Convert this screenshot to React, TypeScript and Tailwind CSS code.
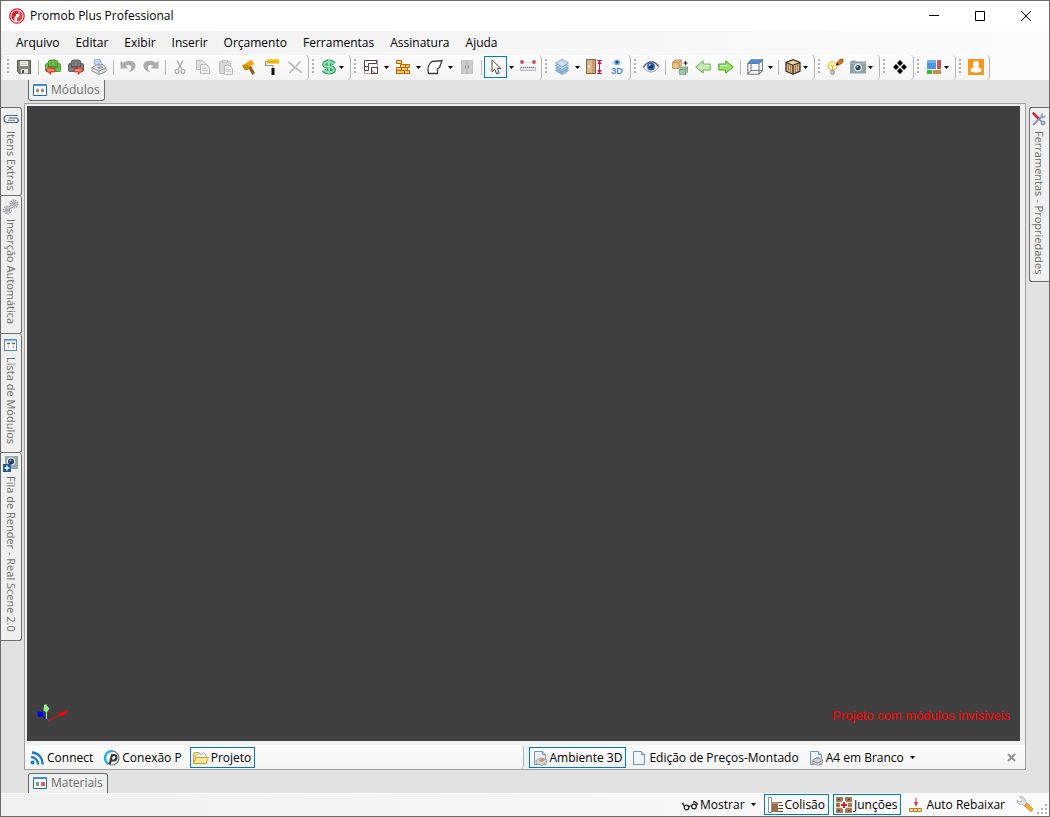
import type { ReactNode } from 'react';
import clsx from 'clsx';

const menus = ['Arquivo', 'Editar', 'Exibir', 'Inserir', 'Orçamento', 'Ferramentas', 'Assinatura', 'Ajuda'];

function Svg({ children, size = 16 }: { children: ReactNode; size?: number }) {
  return (
    <svg width={size} height={size} viewBox={`0 0 ${size} ${size}`} fill="none" className="shrink-0 overflow-visible" aria-hidden="true">
      {children}
    </svg>
  );
}

function Arrow() {
  return (
    <svg width="5" height="3" viewBox="0 0 5 3" className="shrink-0" aria-hidden="true">
      <path d="M0 0h5L2.5 3z" fill="#000" />
    </svg>
  );
}

/* ---------- icons ---------- */

const LogoIcon = () => (
  <Svg>
    <circle cx="8" cy="8" r="7.2" fill="#fff" stroke="#d9222a" strokeWidth="1.3" />
    <path d="M8 2.5a5.5 5.5 0 0 0-2.5 10.4V8.5H7V6h2.5V2.8z" fill="#d9222a" />
    <path d="M10.3 3v4.2c0 1.3-1 2.2-2.3 2.2v4.1a5.5 5.500 0 0 0 2.3-10.5z" fill="#e0444a" />
    <path d="M6.8 13V8.800h1.700" stroke="#fff" />
  </Svg>
);

const SaveIcon = () => (
  <Svg>
    <path d="M1.5 1.5h13v13h-11l-2-2z" fill="#85857d" stroke="#55554f" />
    <path d="M4 2h8v5H4z" fill="#f2f2ea" />
    <path d="M5 3.5h6M5 5.5h6" stroke="#c6c6b2" />
    <path d="M5 10h7v4.5H5z" fill="#e4e4de" />
    <path d="M6 11h2v3H6z" fill="#4a4a46" />
  </Svg>
);

function Armchair({ fill, dark, right }: { fill: string; dark: string; right?: boolean }) {
  return (
    <Svg>
      <path d="M3 4q0-3 3-3h4q3 0 3 3v4H3z" fill={fill} stroke={dark} strokeWidth=".8" />
      <path
        d="M.5 6q0-1.500 1.500-1.500t1.500 1.500v2h9V6q0-1.500 1.500-1.500t1.500 1.500v5.500q0 1-1 1h-13q-1 0-1-1z"
        fill={fill}
        stroke={dark}
        strokeWidth=".8"
      />
      <path d="M6 2.5v4M10 2.5v4M3.5 9h9" stroke={dark} strokeWidth=".5" />
      <path
        d={right ? 'M6 9.500h4V7l5.500 4.300L10 15.500V13H6z' : 'M10 9.500H6V7L.5 11.300 6 15.500V13h4z'}
        fill="#e8604b"
        stroke="#b62c1c"
        strokeWidth=".6"
      />
      <path d={right ? 'M7 11h6' : 'M3 11h6'} stroke="#f5a79a" />
    </Svg>
  );
}

const PrinterIcon = () => (
  <Svg>
    <path d="M3 1l6-.5 2 6-6 1.500z" fill="#d9e9fb" stroke="#7da4d4" />
    <path d="M5 3l3.500-.4M5.600 5l3.500-.7" stroke="#8ab0dd" strokeWidth=".7" />
    <path d="M1 8.500L5 6l7-.5 3 3.500v3.500l-7 3-7-3.500z" fill="#e3e4e6" stroke="#8b8f94" strokeLinejoin="round" />
    <path d="M1 8.500l7 3.500 7-3M8 12v3" stroke="#8b8f94" />
    <path d="M5.500 8l5-1 2 1.500-4.500 1.700z" fill="#9a9da1" />
  </Svg>
);

const UndoIcon = () => (
  <Svg>
    <path
      d="M.5 1.500v8h8L5.800 7C7.500 5.500 10.300 5.600 11 7.800c.6 2-.5 3.900-2.800 5.400 4.700-.8 7.600-3.400 7.300-7C15.100 1.700 8 .2 3 4z"
      fill="#ababab"
    />
  </Svg>
);

const RedoIcon = () => (
  <Svg>
    <path
      d="M15.500 1.500v8h-8L10.200 7C8.500 5.500 5.700 5.600 5 7.800c-.6 2 .5 3.900 2.800 5.400C3.100 12.400.2 9.800.5 6.200.9 1.700 8 .2 13 4z"
      fill="#ababab"
    />
  </Svg>
);

const CutIcon = () => (
  <Svg>
    <path d="M5 1.500l5 9M11 1.500l-5 9" stroke="#b0b0b0" strokeWidth="1.500" />
    <circle cx="5" cy="12.500" r="1.900" stroke="#b0b0b0" strokeWidth="1.300" />
    <circle cx="11" cy="12.500" r="1.900" stroke="#b0b0b0" strokeWidth="1.300" />
  </Svg>
);

const CopyIcon = () => (
  <Svg>
    <path d="M1.500 1.500h6l3 3v6h-9z" fill="#e0e0e0" stroke="#bdbdbd" />
    <path d="M5.500 5.500h6l3 3v6h-9z" fill="#ececec" stroke="#b8b8b8" />
    <path d="M7 9.500h4M7 11.500h6" stroke="#c9c9c9" />
  </Svg>
);

const PasteIcon = () => (
  <Svg>
    <rect x="1.500" y="2.500" width="11" height="12" rx="1" fill="#d8d8d8" stroke="#bababa" />
    <path d="M4.500 3.500v-2h5v2z" fill="#ececec" stroke="#bababa" />
    <path d="M6.500 6.500h5l3 3v6h-8z" fill="#f0f0f0" stroke="#bababa" />
    <path d="M8 10.500h5M8 12.500h5" stroke="#cccccc" />
  </Svg>
);

const HammerIcon = () => (
  <Svg>
    <path d="M6.500 7.500L9.500 6l4.500 8-2.500 2z" fill="#8d5b16" />
    <path d="M1 6.500L10.500.8l2.800 4L8 8.500l-1 2.500H4z" fill="#eaa614" />
    <path d="M1 6.500L7 6l1 2.500-1 2.500H4z" fill="#c98607" />
  </Svg>
);

const RollerIcon = () => (
  <Svg>
    <path d="M3 0h12v4.500H3z" fill="#f3b000" />
    <path d="M3 0h12v1.500H3z" fill="#ffd04a" />
    <path d="M3 2.500H1.500v4H9v3" stroke="#8d8d8d" />
    <path d="M7.500 9h3v7h-3z" fill="#111" />
  </Svg>
);

const DeleteIcon = () => (
  <Svg>
    <path d="M2 3.500l12 9.500M13 3L3 13.500" stroke="#bababa" strokeWidth="1.800" strokeLinecap="round" />
  </Svg>
);

const DollarIcon = () => (
  <Svg>
    <path
      d="M13 4.800C12 3.300 10.500 2.800 8 2.800c-3 0-4.800 1-4.800 2.700C3.200 9 12.800 6.800 12.800 10.500c0 1.700-1.900 2.700-4.800 2.700-2.600 0-4.500-.7-5.300-2.200M8 .5v15"
      stroke="#2f8f5e"
      strokeWidth="4.200"
      strokeLinejoin="round"
    />
    <path
      d="M13.300 5C12 3.300 10.500 2.800 8 2.800c-3 0-4.800 1-4.800 2.700C3.200 9 12.800 6.800 12.800 10.500c0 1.700-1.900 2.700-4.800 2.700-2.600 0-4.300-.7-5.300-2.300M8 0v16"
      stroke="#8be0ae"
      strokeWidth="2.200"
    />
  </Svg>
);

const PlanIcon = () => (
  <Svg>
    <rect x="1.500" y="1.500" width="13" height="13" fill="#fff" stroke="#f08a8a" />
    <path d="M1.500 7.500v-6h12v3h-8v3z" stroke="#4b4444" />
    <path d="M1.500 7.500v4h4v-4M8.500 8.500h6v6h-6z" stroke="#4b4444" />
    <path d="M8.500 8.500q0 6 6 6" stroke="#4b4444" strokeWidth=".7" />
  </Svg>
);

const BricksIcon = () => (
  <Svg>
    <g fill="#fcc468" stroke="#b06c0c">
      <path d="M1.500 1.500h5v3h-5zM5.500 5.500h9v3h-9zM1.500 8.500h5v3h-5zM6.500 8.500h6v3h-6zM1.500 11.500h8v3h-8zM9.500 11.500h5v3h-5z" />
      <path d="M10.500 5.500v3" />
    </g>
  </Svg>
);

const ShapeIcon = () => (
  <Svg>
    <path d="M5 2.500l10-1-2.500 7-2 1.500v4.500h-9C.3 9.500 1.500 5 5 2.500z" fill="#fff" stroke="#3f3f3f" strokeWidth="1.300" />
  </Svg>
);

const WardrobeIcon = () => (
  <Svg>
    <path d="M2.500 1.500h11v13h-11z" fill="#cbcbcb" stroke="#c2c2c2" />
    <path d="M8 1.500v13" stroke="#b4b4b4" />
    <path d="M6.500 6.500v3M9.500 6.500v3" stroke="#999" />
  </Svg>
);

const CursorIcon = () => (
  <Svg>
    <path d="M4 .8v12l2.800-2.600 2 4.800 2.400-1-2-4.600h3.600z" fill="#fff" stroke="#4a4a4a" strokeLinejoin="round" />
  </Svg>
);

const RulerIcon = () => (
  <Svg>
    <circle cx="2" cy="3" r="1.900" fill="#cf4a4a" />
    <circle cx="14" cy="3" r="1.900" fill="#cf4a4a" />
    <path d="M4.500 3.500h7" stroke="#c9c9d4" strokeDasharray="1 1" />
    <path d="M.5 8.500h15v3H.5z" fill="#e5e5ee" stroke="#b9b9c6" />
    <path d="M1 8.500h14" stroke="#6e6e84" strokeDasharray="1 1" />
  </Svg>
);

const LayersIcon = () => (
  <Svg>
    <g stroke="#6f93bc" strokeWidth=".8">
      <path d="M8 8l6.500 3.500-6.500 4-6.500-4z" fill="#8fb4dd" />
      <path d="M8 5.500L14.500 9 8 13 1.500 9z" fill="#a4c4e6" />
      <path d="M8 3l6.500 3.500-6.500 4-6.500-4z" fill="#bcd5ef" />
      <path d="M8 .5L14.500 4 8 8 1.500 4z" fill="#cfdff0" />
    </g>
  </Svg>
);

const DoorSizeIcon = () => (
  <Svg>
    <path d="M.5.500h9v14h-9z" fill="#c79d6f" stroke="#8a6138" />
    <path d="M1 1h5v13H1z" fill="#dcb88d" />
    <path d="M3 6v3" stroke="#fff" />
    <path d="M11 1.500h5M11 14.500h5M13.500 2v12" stroke="#d3124d" />
    <path d="M13.500 1.500l2.200 3.500h-4.400zM13.500 14.500l2.200-3.500h-4.400z" fill="#d3124d" />
  </Svg>
);

const View3DIcon = () => (
  <Svg>
    <ellipse cx="8" cy="3.500" rx="5.500" ry="3" fill="#d7e9f5" />
    <circle cx="8" cy="3.300" r="2.800" fill="#6ea9cf" />
    <circle cx="8" cy="3.300" r="1.300" fill="#163e5e" />
    <text x="8" y="15" textAnchor="middle" fontSize="9" fontWeight="700" fontFamily="Liberation Sans, sans-serif" fill="#4d8abb">
      3D
    </text>
  </Svg>
);

const EyeIcon = () => (
  <Svg>
    <path d="M.5 8.500C3 4 6 3 8.500 3s5 1.200 7 5C13 12 10.500 13 8 13S2.500 11.500.5 8.500z" fill="#f3f5fa" stroke="#9a9faa" />
    <path d="M.5 8C3 4 6 2.800 8.500 2.800s5 1.200 7 4.700" stroke="#575c6b" strokeWidth="1.300" />
    <circle cx="8" cy="7.500" r="3.900" fill="#2c5fb6" />
    <circle cx="8" cy="7.500" r="1.700" fill="#0b1c47" />
    <circle cx="6.800" cy="6" r="1" fill="#c9dcf9" />
  </Svg>
);

const BoxesIcon = () => (
  <Svg>
    <path d="M.5 3.500L3 1h6.500v6L7 9.500H.5z" fill="#e9c283" stroke="#b58b4c" strokeWidth=".8" />
    <path d="M.5 3.500H7v6M7 3.500L9.500 1" stroke="#a67c3c" strokeWidth=".7" />
    <path d="M7.500 10.500l2-2.500h6v5l-2 2.500h-6z" fill="#9fc6ae" stroke="#6a9c80" strokeWidth=".8" />
    <path d="M7.500 10.500h6v5M13.500 10.500l2-2.500" stroke="#5b8f72" strokeWidth=".7" />
    <path d="M11.500 4h4M13.500 2v4" stroke="#111" />
  </Svg>
);

function GreenArrow({ right }: { right?: boolean }) {
  return (
    <Svg>
      <path
        d={right ? 'M.8 5h7V1.800L15.200 8l-7.400 6.200V11h-7z' : 'M15.200 5h-7V1.800L.8 8l7.400 6.200V11h7z'}
        fill={right ? '#9be36b' : '#c3ecb0'}
        stroke={right ? '#4c9f28' : '#6cb154'}
        strokeLinejoin="round"
      />
      <path d={right ? 'M2 6.500h7' : 'M14 6.500H7'} stroke="#e6fadb" />
    </Svg>
  );
}

const CubeIcon = () => (
  <Svg>
    <path d="M4 .8h11.500L12 4.500H.8z" fill="#3993ee" />
    <path
      d="M.8 4.500H12v10.700H.8zM12 4.500L15.500.8v11L12 15.200M4 .8h11.500M.8 4.500L4 .8M4 4.500v7h11.500M4 11.500L.8 15"
      stroke="#777b82"
      strokeWidth="1.100"
    />
  </Svg>
);

const WoodIcon = () => (
  <Svg>
    <path d="M8 .8l7 2.700v8.700l-7 3-7-3V3.500z" fill="#d9b78a" stroke="#2d2218" strokeWidth="1.200" strokeLinejoin="round" />
    <path d="M8 .8l7 2.700-7 2.700-7-2.700z" fill="#ecd2ac" stroke="#2d2218" />
    <path d="M8 6v9" stroke="#2d2218" strokeWidth="1.200" />
    <path d="M3.300 5v7.500M5.600 6v7.500M10.400 6v7.500M12.700 5v7.500" stroke="#8d6a44" strokeWidth=".8" />
  </Svg>
);

const BulbIcon = () => (
  <Svg>
    <circle cx="5.500" cy="7" r="4.500" fill="#fdf3b0" stroke="#d8bb4c" />
    <path d="M5.500 11V7.500L4 6M5.500 7.500L7 6" stroke="#d9a824" />
    <path d="M3.700 11.500h3.600v3.300l-1 1H4.700l-1-1z" fill="#b9bdc4" stroke="#82868d" strokeWidth=".6" />
    <path d="M9.500 6l.7-2.500L13 .3h3v3l-3.500 2.400z" fill="#d9761a" stroke="#7b3d0a" strokeWidth=".7" />
    <path d="M9 6.500l1-2.700 1.800 1.900z" fill="#222" />
  </Svg>
);

const CameraIcon = () => (
  <Svg>
    <path d="M0 2.500h1.500v-1h4v1H16v12H0z" fill="#8fa1a4" />
    <path d="M0 4.500h16" stroke="#a9b8ba" />
    <circle cx="8" cy="8.500" r="4" fill="#dfe9ed" />
    <circle cx="8" cy="8.500" r="2.600" fill="#24435f" />
    <circle cx="7.300" cy="7.700" r=".9" fill="#9ec3e4" />
  </Svg>
);

const DiamondsIcon = () => (
  <Svg>
    <path d="M8 1l3 3-3 3-3-3zM8 9l3 3-3 3-3-3zM4 5l3 3-3 3-3-3zM12 5l3 3-3 3-3-3z" fill="#000" />
  </Svg>
);

const TilesIcon = () => (
  <Svg>
    <path d="M1 1h9v9H1z" fill="#4f97dd" />
    <path d="M1 1h9v3H1z" fill="#6db0ee" />
    <path d="M11 1h4v9h-4z" fill="#c2575c" />
    <path d="M1 11h5v4H1z" fill="#3fae3c" />
    <path d="M7 11h8v4H7z" fill="#c29045" />
  </Svg>
);

const UserIcon = () => (
  <Svg>
    <path d="M0 0h16v16H0z" fill="#f7981d" />
    <path
      d="M8 2c2 0 3 1.400 3 3 0 1.400-.6 2.600-1.200 3.300 2.200.4 3.700 1.500 3.700 3.200 0 1.200-2 2-5.500 2s-5.500-.8-5.500-2c0-1.700 1.500-2.800 3.700-3.200C5.600 7.600 5 6.400 5 5c0-1.600 1-3 3-3z"
      fill="#fff"
    />
  </Svg>
);

const ModulesIcon = () => (
  <Svg size={14}>
    <path d="M.5 1.500h13v11H.5z" fill="#fff" stroke="#1c6cc9" />
    <path d="M0 1h14v2H0z" fill="#3c8ce0" />
    <ellipse cx="4.500" cy="7.500" rx="1.500" ry="2" fill="#a9966e" />
    <ellipse cx="9.500" cy="7.500" rx="1.500" ry="2" fill="#a9966e" />
    <path d="M5 6v3M9 6v3" stroke="#54647c" strokeWidth=".7" />
  </Svg>
);

const MaterialsIcon = () => (
  <Svg size={14}>
    <path d="M.5 1.500h13v11H.5z" fill="#fff" stroke="#1c6cc9" />
    <path d="M0 1h14v2H0z" fill="#3c8ce0" />
    <path d="M3 6h3v4H3z" fill="#6fa287" />
    <path d="M8 6h4v4H8z" fill="#d8605f" />
  </Svg>
);

const ClipIcon = () => (
  <Svg size={14}>
    <path d="M13.500 3.500h-10a3 3 0 0 0 0 7H12a2 2 0 0 0 0-4.500H4.500" stroke="#4d6784" strokeWidth="1.200" />
    <path d="M4 8.300h7" stroke="#4d6784" strokeWidth=".8" />
  </Svg>
);

const GearsIcon = () => (
  <Svg>
    <g stroke="#9b99a3">
      <circle cx="11" cy="5" r="3.800" strokeWidth="1.300" strokeDasharray="1.500 .8" />
      <circle cx="11" cy="5" r="2.300" fill="#dcdbe1" />
      <circle cx="11" cy="5" r=".9" />
      <circle cx="4.500" cy="11" r="3.800" strokeWidth="1.300" strokeDasharray="1.500 .8" />
      <circle cx="4.500" cy="11" r="2.300" fill="#dcdbe1" />
      <circle cx="4.500" cy="11" r=".9" />
    </g>
  </Svg>
);

const ListIcon = () => (
  <Svg size={14}>
    <rect x=".5" y="1.500" width="12" height="11" fill="#fff" stroke="#5587cc" />
    <path d="M1 2h11v1.500H1z" fill="#9cc0ee" />
    <path d="M3 5.500h3M8 5.500h3" stroke="#75602f" strokeWidth="1.500" />
    <path d="M4.500 7.500v3M9.500 7.500v3" stroke="#b9c2cf" />
  </Svg>
);

const RenderQueueIcon = () => (
  <Svg>
    <path d="M2 0h13v13H2z" fill="#97a8ac" />
    <circle cx="8" cy="5.500" r="4.300" fill="#dde5ea" />
    <circle cx="8" cy="5.500" r="3" fill="#24405e" />
    <circle cx="7.300" cy="4.500" r="1" fill="#94b7d8" />
    <path d="M0 8h8v8H0z" fill="#225a95" />
    <path d="M4 9.500v5M1.500 12h5" stroke="#fff" strokeWidth="1.300" />
  </Svg>
);

const ToolsIcon = () => (
  <Svg size={14}>
    <path d="M1 13l8-8" stroke="#8796ac" strokeWidth="2" />
    <path d="M8.500 5c-.5-2 .5-4 3-4l-1 2 1.200 1L13.500 3c.5 2.200-1.500 4-4 3.500z" fill="#9aa9be" />
    <path d="M1.500 1.500L6 6" stroke="#cc2b35" strokeWidth="2.600" strokeLinecap="round" />
    <path d="M6.500 6.500l6 6" stroke="#7a8aa3" strokeWidth="1.600" />
    <circle cx="11" cy="11" r="2" fill="#b5c1d2" stroke="#7889a4" />
  </Svg>
);

const FeedIcon = () => (
  <Svg size={14}>
    <circle cx="2.500" cy="11.500" r="2" fill="#1f78c8" />
    <path d="M1 6a7 7 0 0 1 7 7.500M2 1.500a11 11 0 0 1 10.500 12" stroke="#1f78c8" strokeWidth="2.300" />
  </Svg>
);

const ConexaoIcon = () => (
  <Svg>
    <circle cx="8" cy="8" r="7" fill="#fff" stroke="#6b7074" strokeWidth="1.200" />
    <path d="M9 1.200A6.900 6.900 0 0 0 4.500 14" stroke="#1db3d6" strokeWidth="2.400" />
    <path d="M5.800 14L8 5h2.200c3.400 0 2.800 5.500-.7 5.500H7.500" stroke="#34383c" strokeWidth="2.200" />
  </Svg>
);

const FolderIcon = () => (
  <Svg>
    <path d="M.5 13.500v-10l1-1h4l1.500 2h6v9z" fill="#f5db79" stroke="#c9a23c" />
    <path d="M3 5.500L6 3l2 2 3-2.500 2 3.500v3H3z" fill="#fff" stroke="#9ba8bb" strokeWidth=".7" />
    <path d="M.5 13.500l2.500-6h12.500l-2.500 6z" fill="#fbe897" stroke="#c9a23c" />
  </Svg>
);

function PageIcon({ overlay }: { overlay?: 'cube' | 'printer' }) {
  return (
    <Svg size={14}>
      <path d="M1.500.500h8l3 3v10h-11z" fill="#eef5fd" stroke="#6d93cb" />
      <path d="M9.500.500v3h3" fill="#cfe0f5" stroke="#6d93cb" />
      {overlay && <path d="M3 9.500l4.500-2.500 6 1.500v3.500l-4.500 2.500-6-2z" fill="#d8d6d2" stroke="#9a9691" strokeWidth=".8" />}
      {overlay === 'cube' && <path d="M6 9.500l3-2 3 1.500-3 2z" fill="#c98f52" />}
      {overlay === 'printer' && <path d="M3.500 10l5.500 2 4.500-2.500M5 8.500l3-2 3 1" stroke="#7f8794" />}
    </Svg>
  );
}

const GlassesIcon = () => (
  <Svg>
    <circle cx="4.500" cy="10.500" r="2.300" stroke="#1d1d1d" strokeWidth="1.200" />
    <circle cx="12" cy="9.500" r="2.300" stroke="#1d1d1d" strokeWidth="1.200" />
    <path d="M7 10q1-1.500 2.500-.7M2.500 9.500L.5 6.500 2 6M14 8.500L15.500 7l-3-2.500-1.500 1" stroke="#1d1d1d" strokeWidth="1.100" />
  </Svg>
);

const CollisionIcon = () => (
  <Svg>
    <path d="M1.500.500h3v15h-3z" fill="#fff" stroke="#8b9298" />
    <path d="M5 5h6v10H5z" fill="#9a6b4b" />
    <path d="M5 5h6v2H5z" fill="#b98b69" />
    <path d="M11 5.500h4M12 8.500h4M11 11.500h5M11 14.500h5" stroke="#6b4630" />
  </Svg>
);

const JointsIcon = () => (
  <Svg>
    <path d="M0 0h7v16H0zM9 0h7v16H9z" fill="#a67b5b" />
    <path d="M0 5.500h16M0 10.500h16" stroke="#e9dbcd" />
    <path d="M2 2.500h2M12 2.500h2M2 13.500h2M12 13.500h2M1 8h1" stroke="#4e3421" />
    <path d="M8 4v8M4 8h8" stroke="#fff" strokeWidth="4" />
    <path d="M8 5v6M5 8h6" stroke="#e3171b" strokeWidth="2" />
  </Svg>
);

const LowerIcon = () => (
  <Svg size={14}>
    <path d="M7 0v5" stroke="#d23a3a" />
    <path d="M5 4h4L7 9z" fill="#d23a3a" />
    <path d="M.5 10.500h12v3H.5z" fill="#f6d596" stroke="#b8842d" />
    <path d="M4.500 10.500v3M8.500 10.500v3" stroke="#b8842d" />
  </Svg>
);

const WrenchIcon = () => (
  <Svg>
    <path
      d="M2.500.8L5 3.500 4.500 5.500 2.500 6 0 4C0 7.500 2.500 9.500 5.500 8.500l2 1.800 2.500-3-1.800-1.800C9 3 6 0 2.500.8z"
      fill="#e1e4e8"
      stroke="#959aa2"
      strokeWidth=".7"
    />
    <path d="M7.500 10L10 7l5.500 5.500c1 1.500-1 3.500-2.500 2.500z" fill="#f5b02b" stroke="#c07c14" strokeWidth=".7" />
  </Svg>
);

/* ---------- toolbar pieces ---------- */

function Strip({ children }: { children: ReactNode }) {
  return (
    <div className="flex h-[25px] rounded-r-sm border-r border-[#b4b4b4] bg-linear-to-b from-[#fdfdfd] to-[#f4f4f4] pt-px pr-[2px]">
      <svg width="8" height="22" viewBox="0 0 8 22" className="shrink-0" aria-hidden="true">
        <path d="M3 3h2v2H3zM3 7h2v2H3zM3 11h2v2H3zM3 15h2v2H3z" fill="#b0b0b0" />
      </svg>
      {children}
    </div>
  );
}

interface ToolProps {
  label: string;
  children: ReactNode;
  active?: boolean;
  disabled?: boolean;
}

function Tool({ label, children, active, disabled }: ToolProps) {
  return (
    <button
      type="button"
      aria-label={label}
      title={label}
      disabled={disabled}
      className={clsx(
        'flex h-[22px] w-[23px] shrink-0 items-center border pl-[3px]',
        active ? 'border-[#0078d7]' : 'border-transparent',
      )}
    >
      {children}
    </button>
  );
}

function DropTool({ label, children }: ToolProps) {
  return (
    <button type="button" aria-label={label} title={label} className="flex h-[22px] w-[31px] shrink-0 items-center gap-[2px] pl-1">
      {children}
      <Arrow />
    </button>
  );
}

function SplitTool({ label, children, active }: ToolProps) {
  return (
    <div className="flex">
      <Tool label={label} active={active}>{children}</Tool>
      <button type="button" aria-label={`${label}: opções`} className="flex h-[22px] w-[9px] items-center justify-center">
        <Arrow />
      </button>
    </div>
  );
}

const Sep = () => <span className="mt-1 mr-[2px] ml-[3px] h-[15px] w-px shrink-0 bg-[#bdbdbd]" />;

function Toolbar() {
  return (
    <div className="flex h-[25px] pl-[3px]">
      <Strip>
        <Tool label="Salvar"><SaveIcon /></Tool>
        <Sep />
        <Tool label="Importar"><Armchair fill="#6cc046" dark="#3a7f26" /></Tool>
        <Tool label="Exportar"><Armchair fill="#808080" dark="#4a4a4a" right /></Tool>
        <Tool label="Imprimir"><PrinterIcon /></Tool>
        <Sep />
        <Tool label="Desfazer" disabled><UndoIcon /></Tool>
        <Tool label="Refazer" disabled><RedoIcon /></Tool>
        <Sep />
        <Tool label="Recortar" disabled><CutIcon /></Tool>
        <Tool label="Copiar" disabled><CopyIcon /></Tool>
        <Tool label="Colar" disabled><PasteIcon /></Tool>
        <Tool label="Construir"><HammerIcon /></Tool>
        <Tool label="Pintar"><RollerIcon /></Tool>
        <Tool label="Excluir" disabled><DeleteIcon /></Tool>
      </Strip>
      <Strip>
        <DropTool label="Orçamento"><DollarIcon /></DropTool>
      </Strip>
      <Strip>
        <SplitTool label="Planta"><PlanIcon /></SplitTool>
        <SplitTool label="Paredes"><BricksIcon /></SplitTool>
        <SplitTool label="Forma"><ShapeIcon /></SplitTool>
        <Tool label="Armário" disabled><WardrobeIcon /></Tool>
        <Sep />
        <SplitTool label="Selecionar" active><CursorIcon /></SplitTool>
        <Tool label="Medir"><RulerIcon /></Tool>
      </Strip>
      <Strip>
        <SplitTool label="Camadas"><LayersIcon /></SplitTool>
        <Tool label="Dimensões"><DoorSizeIcon /></Tool>
        <Tool label="Vista 3D"><View3DIcon /></Tool>
      </Strip>
      <Strip>
        <Tool label="Visualizar"><EyeIcon /></Tool>
        <Sep />
        <Tool label="Módulos"><BoxesIcon /></Tool>
        <Tool label="Anterior"><GreenArrow /></Tool>
        <Tool label="Próximo"><GreenArrow right /></Tool>
        <Sep />
        <SplitTool label="Vistas"><CubeIcon /></SplitTool>
        <Sep />
        <DropTool label="Textura"><WoodIcon /></DropTool>
      </Strip>
      <Strip>
        <Tool label="Iluminação"><BulbIcon /></Tool>
        <DropTool label="Câmera"><CameraIcon /></DropTool>
      </Strip>
      <Strip>
        <Tool label="Componentes"><DiamondsIcon /></Tool>
      </Strip>
      <Strip>
        <DropTool label="Layout"><TilesIcon /></DropTool>
      </Strip>
      <Strip>
        <Tool label="Usuário"><UserIcon /></Tool>
      </Strip>
    </div>
  );
}

/* ---------- docked tabs ---------- */

interface SideTabProps {
  label: string;
  icon: ReactNode;
  side: 'left' | 'right';
  className: string;
}

function SideTab({ label, icon, side, className }: SideTabProps) {
  return (
    <button
      type="button"
      className={clsx(
        'flex w-full flex-col items-center gap-1 border border-[#6d6d6d] bg-[#f0f0f0] pt-[3px] text-[#6d6d6d] not-first:border-t-0',
        side === 'left' ? 'rounded-r-[3px] border-l-0' : 'rounded-l-[3px] border-r-0 pr-px',
        className,
      )}
    >
      <span className="flex h-4 items-center">{icon}</span>
      <span className="whitespace-nowrap text-[11px] leading-4 [writing-mode:vertical-rl]">{label}</span>
    </button>
  );
}

interface BarButtonProps {
  label: string;
  icon: ReactNode;
  active?: boolean;
  arrow?: boolean;
}

function BarButton({ label, icon, active, arrow }: BarButtonProps) {
  return (
    <button
      type="button"
      aria-pressed={active}
      className={clsx(
        'flex h-[21px] shrink-0 items-center gap-[2px] whitespace-nowrap border pr-[3px] pl-[2px]',
        active ? 'border-[#0078d7]' : 'border-transparent',
      )}
    >
      <span className="flex w-4 justify-center">{icon}</span>
      <span>{label}</span>
      {arrow && <span className="pl-1"><Arrow /></span>}
    </button>
  );
}

function AxisGizmo() {
  return (
    <svg width="34" height="20" viewBox="0 0 34 20" aria-hidden="true">
      <path d="M10.500 17L25 10" stroke="#f00" />
      <path d="M22 9.500l10-3.500-5.500 6h-4z" fill="#f00" />
      <path d="M9.500 16V8" stroke="#90ee90" />
      <path d="M7 1l2-1 3.500 5-3 3.500-3-2z" fill="#90ee90" />
      <path d="M9.500 16L6 12" stroke="#00f" />
      <path d="M0 7.500l6 .5v4.500L1.500 13z" fill="#00f" />
    </svg>
  );
}

export default function App() {
  return (
    <div className="flex h-screen flex-col overflow-hidden border border-[#6b696b] bg-[#e2e2e2] font-['Open_Sans','Noto_Sans',sans-serif] text-[12px] leading-4 text-black">
      <header className="flex h-[30px] shrink-0 items-center bg-white pl-2">
        <LogoIcon />
        <h1 className="flex-1 pl-[5px]">Promob Plus Professional</h1>
        <div className="flex">
          <button type="button" aria-label="Minimizar" className="flex h-[30px] w-[46px] items-center justify-center">
            <svg width="10" height="10" viewBox="0 0 10 10"><path d="M0 4.500h10" stroke="#000" /></svg>
          </button>
          <button type="button" aria-label="Maximizar" className="flex h-[30px] w-[46px] items-center justify-center">
            <svg width="10" height="10" viewBox="0 0 10 10"><path d="M.5.500h9v9h-9z" fill="none" stroke="#000" /></svg>
          </button>
          <button type="button" aria-label="Fechar" className="flex h-[30px] w-[46px] items-center justify-center">
            <svg width="10" height="10" viewBox="0 0 10 10"><path d="M0 0l10 10M10 0L0 10" stroke="#000" /></svg>
          </button>
        </div>
      </header>

      <div className="shrink-0 bg-linear-to-r from-[#f0f0f0] to-[#fcfcfc]">
        <nav className="flex h-6 items-center pl-[7px]">
          {menus.map((m) => (
            <button key={m} type="button" className="px-2">{m}</button>
          ))}
        </nav>
        <Toolbar />
      </div>

      <div className="flex h-[23px] shrink-0 pl-[27px]">
        <button type="button" className="flex h-[21px] items-center gap-1 rounded-b-[3px] border border-t-0 border-[#6d6d6d] bg-[#f0f0f0] px-1 text-[#6d6d6d]">
          <ModulesIcon />
          Módulos
        </button>
      </div>

      <div className="flex min-h-0 flex-1">
        <aside className="mt-1 w-[21px] shrink-0">
          <SideTab side="left" label="Itens Extras" icon={<ClipIcon />} className="h-[89px]" />
          <SideTab side="left" label="Inserção Automática" icon={<GearsIcon />} className="h-[138px]" />
          <SideTab side="left" label="Lista de Módulos" icon={<ListIcon />} className="h-[119px]" />
          <SideTab side="left" label="Fila de Render - Real Scene 2.0" icon={<RenderQueueIcon />} className="h-[188px]" />
        </aside>

        <main className="ml-[2px] flex min-w-0 flex-1 flex-col border border-[#a0a0a0] bg-[#f0f0f0]">
          <section aria-label="Ambiente 3D" className="relative mt-[2px] mr-[5px] ml-[2px] flex-1 bg-[#404040]">
            <div className="absolute bottom-[17px] left-[10px]"><AxisGizmo /></div>
            <p className="absolute right-[10px] bottom-[17px] font-['Liberation_Sans',sans-serif] text-[13px] text-[#ff0000]">
              Projeto com módulos invisiveis
            </p>
          </section>
          <div className="mt-1 flex h-6 shrink-0 bg-[#f0f0f0]">
            <div className="flex flex-1 items-center gap-1 rounded-r-sm border-r border-[#b4b4b4] bg-linear-to-b from-[#fdfdfd] to-[#f4f4f4] pt-px pl-px">
              <BarButton label="Connect" icon={<FeedIcon />} />
              <BarButton label="Conexão P" icon={<ConexaoIcon />} />
              <BarButton label="Projeto" icon={<FolderIcon />} active />
            </div>
            <div className="ml-[5px] flex flex-1 items-center gap-[2px] bg-linear-to-b from-[#fdfdfd] to-[#f4f4f4] pt-px">
              <BarButton label="Ambiente 3D" icon={<PageIcon overlay="cube" />} active />
              <BarButton label="Edição de Preços-Montado" icon={<PageIcon />} />
              <BarButton label="A4 em Branco" icon={<PageIcon overlay="printer" />} arrow />
              <button type="button" aria-label="Fechar vista" className="mr-[9px] ml-auto">
                <svg width="9" height="9" viewBox="0 0 9 9"><path d="M1 1l7 7M8 1L1 8" stroke="#959595" strokeWidth="2" /></svg>
              </button>
            </div>
          </div>
        </main>

        <aside className="mt-1 ml-[3px] w-5 shrink-0">
          <SideTab side="right" label="Ferramentas - Propriedades" icon={<ToolsIcon />} className="h-[175px]" />
        </aside>
      </div>

      <div className="flex h-[23px] shrink-0 items-end pl-[27px]">
        <button type="button" className="flex h-5 items-center gap-1 rounded-t-[3px] border border-b-0 border-[#6d6d6d] bg-[#f0f0f0] px-1 pb-px text-[#6d6d6d]">
          <MaterialsIcon />
          Materiais
        </button>
      </div>

      <footer className="flex h-[23px] shrink-0 items-start justify-end gap-1 border-t border-white bg-linear-to-r from-[#f0f0f0] to-[#fcfcfc]">
        <BarButton label="Mostrar" icon={<GlassesIcon />} arrow />
        <BarButton label="Colisão" icon={<CollisionIcon />} active />
        <BarButton label="Junções" icon={<JointsIcon />} active />
        <BarButton label="Auto Rebaixar" icon={<LowerIcon />} />
        <button type="button" aria-label="Configurar" className="pt-[2px] pl-1"><WrenchIcon /></button>
        <svg width="12" height="12" viewBox="0 0 12 12" className="self-end" aria-hidden="true">
          <path d="M8 0h2v2H8zM4 4h2v2H4zM8 4h2v2H8zM0 8h2v2H0zM4 8h2v2H4zM8 8h2v2H8z" fill="#b4b4b4" />
        </svg>
      </footer>
    </div>
  );
}
